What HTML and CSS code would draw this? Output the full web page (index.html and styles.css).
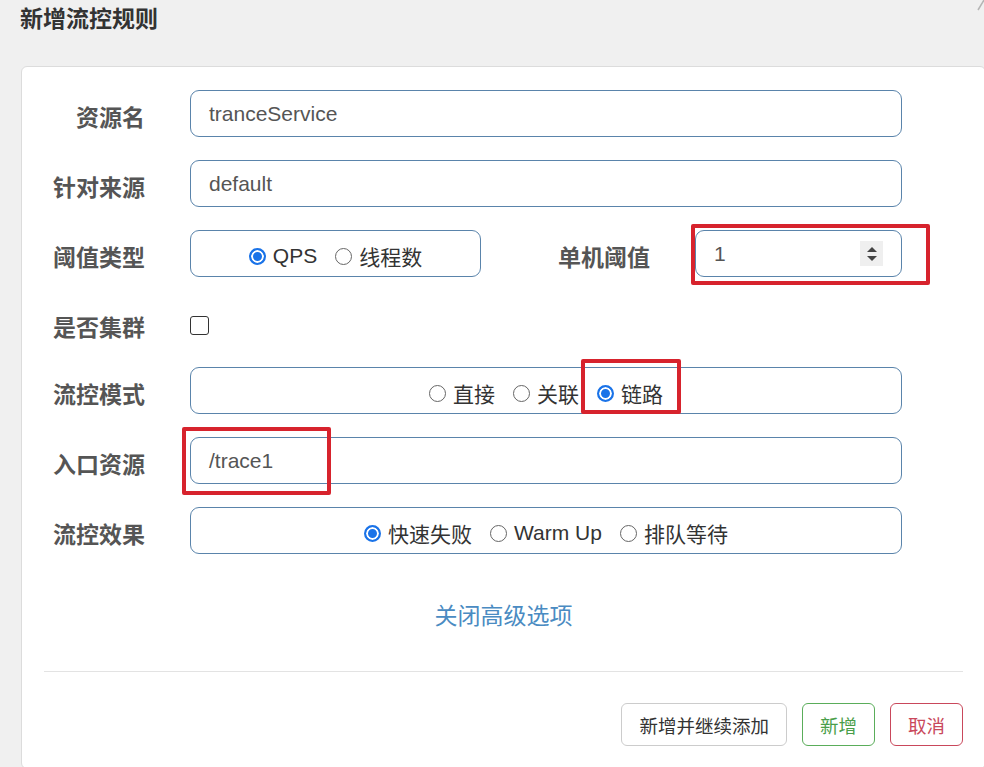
FILE: index.html
```html
<!DOCTYPE html>
<html lang="zh-CN">
<head>
    <meta charset="UTF-8">
    <meta name="viewport" content="width=device-width, initial-scale=1.0">
    <title>新增流控规则</title>
    <link rel="stylesheet" href="styles.css">
</head>
<body>
    <div class="header">
        <h3 class="title">新增流控规则</h3>
        <svg class="close-edge" width="8" height="12" viewBox="0 0 8 12">
            <path d="M8 0 L2 10" stroke="#b5b5b5" stroke-width="1.5" fill="none"/>
        </svg>
    </div>

    <div class="card">
        <div class="form-row">
            <label class="form-label">资源名</label>
            <div class="field">tranceService</div>
        </div>

        <div class="form-row">
            <label class="form-label">针对来源</label>
            <div class="field">default</div>
        </div>

        <div class="form-row">
            <label class="form-label">阈值类型</label>
            <div class="split">
                <div class="field radio-box type-box">
                    <span class="option"><span class="radio checked"></span>QPS</span>
                    <span class="option"><span class="radio"></span>线程数</span>
                </div>
                <label class="form-label sub-label">单机阈值</label>
                <div class="num-wrap">
                    <div class="field num-field">
                        <span>1</span>
                        <span class="spinner">
                            <svg width="12" height="16" viewBox="0 0 12 16">
                                <path d="M6 1 L11 6 L1 6 Z" fill="#444"/>
                                <path d="M1 10 L11 10 L6 15 Z" fill="#444"/>
                            </svg>
                        </span>
                    </div>
                    <span class="mark mark-num"></span>
                </div>
            </div>
        </div>

        <div class="form-row check-row">
            <label class="form-label">是否集群</label>
            <div><span class="checkbox"></span></div>
        </div>

        <div class="form-row">
            <label class="form-label">流控模式</label>
            <div class="field radio-box">
                <span class="option"><span class="radio"></span>直接</span>
                <span class="option"><span class="radio"></span>关联</span>
                <span class="option marked"><span class="radio checked"></span>链路<span class="mark mark-chain"></span></span>
            </div>
        </div>

        <div class="form-row">
            <label class="form-label">入口资源</label>
            <div class="entry-wrap">
                <div class="field">/trace1</div>
                <span class="mark mark-entry"></span>
            </div>
        </div>

        <div class="form-row">
            <label class="form-label">流控效果</label>
            <div class="field radio-box">
                <span class="option"><span class="radio checked"></span>快速失败</span>
                <span class="option"><span class="radio"></span>Warm Up</span>
                <span class="option"><span class="radio"></span>排队等待</span>
            </div>
        </div>

        <div class="advanced">
            <a class="link">关闭高级选项</a>
        </div>

        <div class="footer">
            <button class="btn">新增并继续添加</button>
            <button class="btn btn-add">新增</button>
            <button class="btn btn-cancel">取消</button>
        </div>
    </div>
</body>
</html>
```

FILE: styles.css
```css
body {
    margin: 0;
    height: 767px;
    overflow: hidden;
    background-color: #f0f0f0;
    font-family: "Liberation Sans", "Noto Sans CJK SC", sans-serif;
    color: #333;
}

.header {
    height: 66px;
    display: flex;
    justify-content: space-between;
    align-items: flex-start;
}

.title {
    margin: 0;
    padding: 5px 0 0 20px;
    font-size: 23px;
    line-height: 28px;
    font-weight: bold;
    color: #333;
}

.close-edge {
    display: block;
}

.card {
    margin-left: 21px;
    width: 965px;
    box-sizing: border-box;
    background-color: #fff;
    border: 1px solid #dcdcdc;
    border-radius: 6px;
    padding-top: 23px;
    padding-bottom: 22px;
}

.form-row {
    display: grid;
    grid-template-columns: 123px 712px;
    column-gap: 45px;
    align-items: center;
    margin-bottom: 23px;
}

.check-row {
    height: 47px;
    margin-bottom: 20px;
}

.form-label {
    text-align: right;
    font-size: 23px;
    font-weight: bold;
    color: #555;
    padding-top: 5px;
}

.field {
    height: 47px;
    box-sizing: border-box;
    border: 1px solid #5a84ab;
    border-radius: 9px;
    padding: 0 18px;
    display: flex;
    align-items: center;
    font-size: 21px;
    color: #555;
}

.split {
    display: flex;
    align-items: center;
    gap: 45px;
}

.type-box {
    width: 291px;
}

.sub-label {
    flex: 1;
}

.num-wrap {
    position: relative;
    width: 207px;
}

.num-field {
    justify-content: space-between;
    padding-right: 18px;
}

.spinner {
    width: 23px;
    height: 25px;
    background-color: #efefef;
    display: flex;
    align-items: center;
    justify-content: center;
}

.radio-box {
    justify-content: center;
    gap: 18px;
    padding-top: 5px;
    color: #333;
}

.option {
    display: flex;
    align-items: center;
    gap: 7px;
}

.marked {
    position: relative;
}

.radio {
    width: 17px;
    height: 17px;
    box-sizing: border-box;
    border: 1px solid #666;
    border-radius: 50%;
    background-color: #fff;
}

.radio.checked {
    border: 2px solid #1a73e8;
    background-color: #1a73e8;
    box-shadow: inset 0 0 0 2px #fff;
}

.checkbox {
    display: block;
    width: 19px;
    height: 19px;
    box-sizing: border-box;
    border: 1.5px solid #333;
    border-radius: 3px;
    margin-top: 4px;
}

.entry-wrap {
    position: relative;
}

.mark {
    position: absolute;
    border: 4px solid #d7232d;
    border-radius: 2px;
    pointer-events: none;
}

.mark-num {
    left: -4px;
    top: -6px;
    right: -28px;
    bottom: -8px;
}

.mark-chain {
    left: -16px;
    right: -18px;
    top: -19px;
    bottom: -6px;
}

.mark-entry {
    left: -8px;
    top: -10px;
    width: 141px;
    bottom: -11px;
}

.advanced {
    text-align: center;
    padding-top: 24px;
    padding-bottom: 40px;
}

.link {
    font-size: 23px;
    line-height: 30px;
    color: #4a8bc2;
    cursor: pointer;
}

.footer {
    margin: 0 22px;
    border-top: 1px solid #e3e3e3;
    padding-top: 31px;
    display: flex;
    justify-content: flex-end;
    gap: 15px;
}

.btn {
    height: 43px;
    padding: 0 17px;
    font-family: "Liberation Sans", "Noto Sans CJK SC", sans-serif;
    font-size: 18.5px;
    color: #333;
    background-color: #fff;
    border: 1px solid #ccc;
    border-radius: 6px;
    cursor: pointer;
}

.btn-add {
    color: #4a9e4a;
    border-color: #5aad5a;
}

.btn-cancel {
    color: #c9485b;
    border-color: #c9485b;
}
```
